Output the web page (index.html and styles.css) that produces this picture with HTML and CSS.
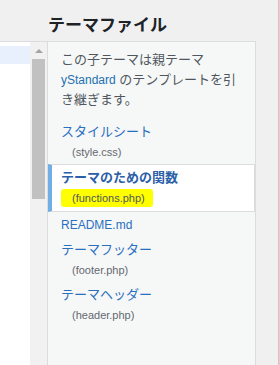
FILE: index.html
```html
<!DOCTYPE html>
<html lang="ja">
<head>
<meta charset="utf-8">
<link rel="stylesheet" href="styles.css">
</head>
<body>
<div class="page">
  <div class="editor">
    <div class="line-hl"></div>
  </div>
  <div class="vscroll">
    <span class="arrow"></span>
    <div class="thumb"></div>
  </div>
  <h2 class="title">テーマファイル</h2>
  <div class="panel">
    <p class="desc">この子テーマは親テーマ<br><a class="link latin" href="#">yStandard</a> のテンプレートを引<br>き継ぎます。</p>
    <ul class="files">
      <li><a class="file" href="#"><span class="name">スタイルシート</span><span class="path">(style.css)</span></a></li>
      <li><a class="file current" href="#"><span class="name">テーマのための関数</span><span class="path"><span class="marker">(functions.php)</span></span></a></li>
      <li><a class="file" href="#"><span class="name latin">README.md</span></a></li>
      <li><a class="file" href="#"><span class="name">テーマフッター</span><span class="path">(footer.php)</span></a></li>
      <li><a class="file" href="#"><span class="name">テーマヘッダー</span><span class="path">(header.php)</span></a></li>
    </ul>
  </div>
  <div class="gap"></div>
  <div class="rail"></div>
</div>
</body>
</html>
```
FILE: styles.css
```css
html, body {
  margin: 0;
  padding: 0;
}
body {
  background: #f0f0f1;
  font-family: "Liberation Sans", "Noto Sans CJK JP", sans-serif;
  font-size: 13px;
  color: #50575e;
  height: 365px;
  overflow: hidden;
}
.page {
  display: grid;
  grid-template-columns: 30px 17px 209px 22px 1px;
  grid-template-rows: 41px 324px;
  height: 365px;
}
.title {
  grid-column: 3;
  grid-row: 1;
  margin: 0;
  padding: 15px 0 0 1px;
  font-size: 17px;
  line-height: 21px;
  font-weight: 700;
  color: #1d2327;
  white-space: nowrap;
}
.editor {
  grid-column: 1;
  grid-row: 2;
  background: #fff;
  border-top: 1px solid #dcdcde;
  padding-top: 4px;
}
.line-hl {
  height: 18px;
  background: #e8f0fe;
}
.vscroll {
  grid-column: 2;
  grid-row: 2;
  background: #f1f1f1;
  border-top: 1px solid #dcdcde;
  display: flex;
  flex-direction: column;
  align-items: center;
  padding-top: 7px;
}
.arrow {
  width: 0;
  height: 0;
  border-left: 4px solid transparent;
  border-right: 4px solid transparent;
  border-bottom: 4px solid #a3a3a3;
}
.thumb {
  margin-top: 6px;
  width: 13px;
  height: 140px;
  background: #c1c1c1;
}
.panel {
  grid-column: 3;
  grid-row: 2;
  background: #f6f7f7;
  border: 1px solid #dcdcde;
  border-bottom: none;
  padding-top: 8px;
}
.desc {
  margin: 0 0 9px;
  padding: 0 13px;
  line-height: 19.5px;
  color: #50575e;
}
.link {
  color: #2271b1;
  text-decoration: none;
}
.latin {
  font-size: 12px;
}
.files {
  list-style: none;
  margin: 0;
  padding: 0;
}
.file {
  display: block;
  padding: 3px 13px 2px;
  text-decoration: none;
  color: #2a6fc0;
}
.name {
  display: block;
  line-height: 20px;
  font-size: 13px;
}
.name.latin {
  font-size: 12px;
}
.path {
  display: block;
  line-height: 20px;
  font-size: 11px;
  padding-left: 11px;
  color: #646970;
}
.file.current {
  background: #fff;
  border: 1px solid #dcdcde;
  border-left: 4px solid #72aee6;
  padding: 3px 13px 3px 9px;
}
.file.current .name {
  font-weight: 700;
  color: #2c5fa8;
}
.marker {
  background: #ffff00;
  color: #50575e;
  padding: 3px 8px 3px 11px;
  margin-left: -11px;
  border-radius: 3px;
}
.gap {
  grid-column: 4;
  grid-row: 1 / 3;
}
.rail {
  grid-column: 5;
  grid-row: 1 / 3;
  background: #c8c8c8;
}
```
